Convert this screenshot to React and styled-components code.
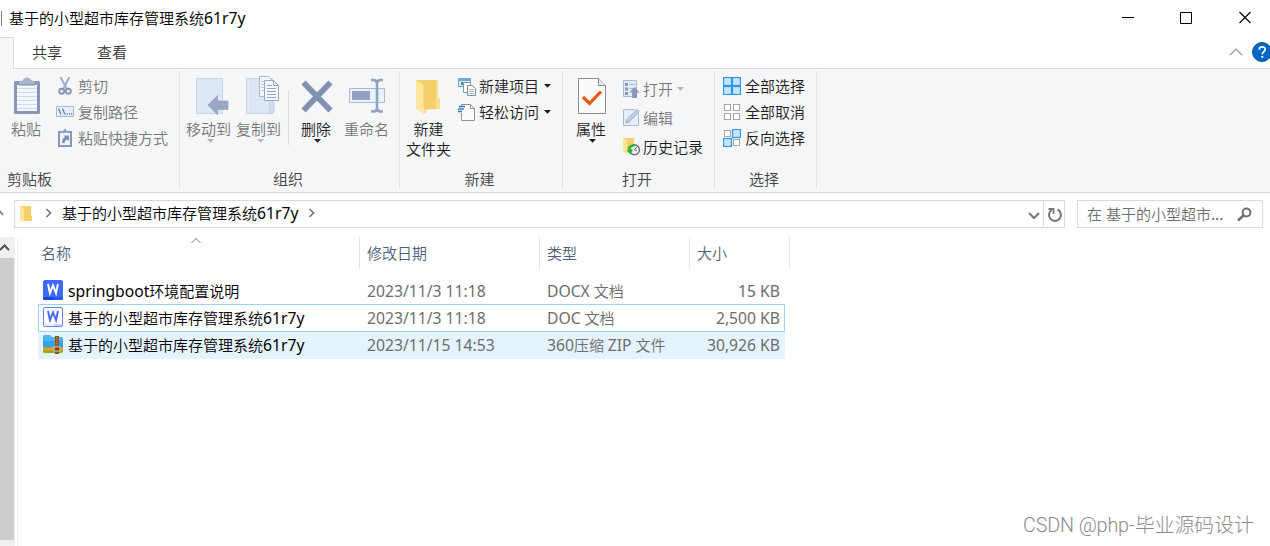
import styled, { createGlobalStyle } from "styled-components";

const GlobalStyle = createGlobalStyle`
  * {
    box-sizing: border-box;
  }
  body {
    margin: 0;
    overflow: hidden;
    background: #fff;
    font-family: "Noto Sans", "Noto Sans CJK SC", sans-serif;
    font-size: 15px;
    font-weight: 350;
    line-height: 20px;
    color: #000;
  }
  svg {
    display: block;
    flex: none;
  }
`;

const Window = styled.div`
  position: relative;
  display: flex;
  flex-direction: column;
  width: 1270px;
  height: 546px;
  overflow: hidden;
  white-space: nowrap;
`;

const TitleBar = styled.div`
  display: flex;
  align-items: center;
  height: 37px;
  padding-bottom: 2px;
`;
const TitleMark = styled.div`
  width: 1px;
  height: 15px;
  margin: 2px 7px 0 1px;
  background: #7d7d7d;
`;
const Title = styled.div`
  flex: 1;
`;
const Latin = styled.span`
  font-size: 15.7px;
  font-weight: 400;
  line-height: 1;
`;
const WindowButtons = styled.div`
  display: flex;
  gap: 45px;
  padding-right: 19px;
`;
const CloseButton = styled.div`
  margin-left: 1px;
`;

const TabBar = styled.div`
  display: flex;
  height: 32px;
`;
const ActiveTab = styled.div`
  width: 14px;
  background: #f5f6f7;
  border-top: 1px solid #dadbdc;
  border-right: 1px solid #dadbdc;
`;
const Tabs = styled.div`
  flex: 1;
  display: flex;
  align-items: center;
  gap: 35px;
  padding: 0 0 2px 18px;
  border-bottom: 1px solid #dadbdc;
  color: #333;
`;
const TabTools = styled.div`
  display: flex;
  align-items: center;
  gap: 9px;
  margin-left: auto;
  margin-right: -2px;
`;

const Ribbon = styled.div`
  display: flex;
  height: 124px;
  padding-top: 2px;
  background: #f5f6f7;
  border-bottom: 1px solid #dadbdc;
`;
const Group = styled.div`
  display: flex;
  flex-direction: column;
  width: ${props => props.$width}px;
  height: 118px;
  border-right: 1px solid #e2e3e4;
`;
const GroupBody = styled.div`
  display: flex;
  height: 98px;
  padding-left: ${props => props.$left || 0}px;
`;
const GroupLabel = styled.div`
  padding: ${props => props.$left ? "0 0 0 7px" : "0 3px 0 0"};
  text-align: ${props => props.$left ? "left" : "center"};
  color: #444;
`;
const BigButton = styled.div`
  display: flex;
  flex-direction: column;
  align-items: center;
  width: ${props => props.$width}px;
  padding-top: 5px;
  text-align: center;
  color: ${props => props.$disabled ? "#777" : "#1e1e1e"};
`;
const BigLabel = styled.div`
  margin-top: 1px;
`;
const BigArrow = styled.div`
  display: flex;
  padding-left: 3px;
`;
const Divider = styled.div`
  width: 1px;
  height: 55px;
  margin: 19px 0 0 5px;
  background: #dcddde;
`;
const Column = styled.div`
  display: flex;
  flex-direction: column;
  padding: ${props => props.$top}px 0 0 ${props => props.$left}px;
`;
const SmallButton = styled.div`
  display: flex;
  align-items: center;
  gap: ${props => props.$gap || 3}px;
  height: ${props => props.$height || 26}px;
  color: ${props => props.$disabled ? "#777" : "#1e1e1e"};
`;
const SmallArrow = styled.div`
  margin-left: 2px;
`;

const AddressRow = styled.div`
  display: flex;
  height: 44px;
  padding-top: 7px;
`;
const UpHint = styled.div`
  width: 14px;
  padding-top: 10px;
`;
const AddressBox = styled.div`
  display: flex;
  align-items: center;
  width: 1051px;
  height: 28px;
  padding-left: 4px;
  border: 1px solid #d9d9d9;
`;
const Crumb = styled.div`
  margin: 0 10px 2px 9px;
`;
const CrumbArrow = styled.div`
  margin-left: ${props => props.$left || 0}px;
  margin-bottom: 2px;
`;
const DropArrow = styled.div`
  margin: 3px 3px 0 auto;
`;
const Refresh = styled.div`
  display: flex;
  align-items: center;
  justify-content: center;
  width: 21px;
  height: 26px;
  padding: 2px 0 0 2px;
  border-left: 1px solid #d9d9d9;
`;
const SearchBox = styled.div`
  display: flex;
  align-items: center;
  justify-content: space-between;
  width: 186px;
  height: 28px;
  margin-left: 12px;
  padding: 0 10px 0 9px;
  border: 1px solid #d9d9d9;
  color: #6d6d6d;
`;

const Main = styled.div`
  flex: 1;
  display: flex;
`;
const Scrollbar = styled.div`
  width: 15px;
  background: #f0f0f0;
`;
const ScrollUp = styled.div`
  height: 21px;
  padding-top: 7px;
`;
const ScrollThumb = styled.div`
  width: 14px;
  height: 282px;
  background: #cdcdcd;
`;
const Files = styled.div`
  flex: 1;
  margin-left: 2px;
  padding-left: 20px;
  border-left: 1px solid #f0f0f0;
`;
const Header = styled.div`
  display: flex;
  height: 32px;
  margin-bottom: 8px;
  color: #4c607a;
`;
const HeaderCell = styled.div`
  position: relative;
  width: ${props => props.$width}px;
  padding: 6px 0 0 ${props => props.$left || 7}px;
  border-right: 1px solid #e5e5e5;
`;
const SortMark = styled.div`
  position: absolute;
  left: 153px;
  top: 1px;
`;
const Row = styled.div`
  display: flex;
  align-items: center;
  width: 747px;
  height: ${props => props.$focused ? 28 : 27}px;
  border: ${props => props.$focused ? "1px solid #99d1ff" : "none"};
  padding: ${props => props.$focused ? "0 4px" : "0 5px"};
  padding-bottom: ${props => props.$hover ? 2 : 0}px;
  background: ${props => props.$hover ? "#e5f3ff" : "#fff"};
`;
const NameCell = styled.div`
  display: flex;
  align-items: center;
  gap: 5px;
  width: 324px;

  svg {
    margin-bottom: 2px;
  }
`;
const InfoCell = styled.div`
  width: ${props => props.$width}px;
  text-align: ${props => props.$right ? "right" : "left"};
  color: #6d6d6d;
`;

const Watermark = styled.div`
  position: absolute;
  left: 1023px;
  top: 514px;
  font-family: Roboto, "Noto Sans CJK SC", sans-serif;
  font-size: 19.8px;
  font-weight: 300;
  line-height: 24px;
  color: #8c8c8c;
`;
const WatermarkLatin = styled.span`
  display: inline-block;
  width: 112px;
  letter-spacing: -0.15px;
`;

const Arrow = ({ color = "#1e1e1e" }) => (
  <svg width="7" height="4" viewBox="0 0 7 4"><path d="M0 0h7L3.5 3.8z" fill={color} /></svg>
);

const Chevron = ({ width, height, d, color, stroke = 1.2 }) => (
  <svg width={width} height={height}><path d={d} fill="none" stroke={color} strokeWidth={stroke} /></svg>
);

const PasteIcon = () => (
  <svg width="52" height="42">
    <rect x="14" y="5" width="26" height="33" rx="1.5" fill="#8797b8" />
    <path d="M17 9h20v26H17z" fill="#f3f7fd" />
    <path d="M17 12.5h20M17 16.5h20M17 20.5h20M17 24.5h20M17 28.5h20M17 32.5h20" stroke="#d0dced" />
    <path d="M19 9V6l4-2c1-3.5 7-3.5 8 0l4 2v3z" fill="#a6b5cf" />
    <path d="M19 9h16" stroke="#7888aa" />
  </svg>
);

const Sheet = ({ x }) => (
  <>
    <path d={`M${x + 0.5} 2.5h26v35h-26z`} fill="#dce6f4" stroke="#c8d6ea" />
    <path d={`M${x + 2.5} 3v34`} stroke="#e8eff9" />
  </>
);

const MoveIcon = () => (
  <svg width="51" height="42">
    <Sheet x={13} />
    <path d="M25 29l9.500-9.500V25H45v8.500H34.500V39z" fill="#9aa8c5" stroke="#8c9cbd" strokeWidth=".6" />
  </svg>
);

const CopyIcon = () => (
  <svg width="49" height="42">
    <Sheet x={12} />
    <path d="M36 37V27c0-2 4-2 4 0v8c0 2-2 2.500-4 2.500z" fill="#d3dfef" stroke="#bfcde2" />
    <path d="M25.500.500h9l4 4v16h-13z" fill="#f5f9ff" stroke="#a7b6d1" />
    <path d="M27 5.500h5M27 8.500h5M27 11.500h5M27 14.500h5" stroke="#b8c5da" />
    <path d="M30.500 4.500h9l5 5v15h-14z" fill="#f5f9ff" stroke="#94a5c5" />
    <path d="M39.500 4.500v5h5M33 9.500h5M33 12.500h9M33 15.500h9M33 18.500h9M33 21.500h9" fill="none" stroke="#94a5c5" />
  </svg>
);

const DeleteIcon = () => (
  <svg width="54" height="42">
    <path d="M14.500 6.500l27 28M41.500 6.500l-27 28" stroke="#8191b3" strokeWidth="5.800" />
  </svg>
);

const RenameIcon = () => (
  <svg width="47" height="42">
    <path d="M6.500 12.500h35v14h-35z" fill="#e9f1fc" stroke="#a9b9d3" />
    <path d="M9 15h18v9H9z" fill="#91a1c0" />
    <path d="M28 4h2.500Q34 4 34 8q0-4 3.500-4H40M28 35.500h2.500Q34 35.500 34 31.500q0 4 3.500 4H40M34 7v26" fill="none" stroke="#91a1c0" strokeWidth="2.600" />
  </svg>
);

const NewFolderIcon = () => (
  <svg width="51" height="42">
    <path d="M13 4h22v18l2 1v10l-16 .500z" fill="#f6cf6b" />
    <path d="M33 4h2v18l2 1v10h-4z" fill="#f9dc8c" />
    <path d="M13 4l7.500 5v29L13 32z" fill="#ffe79f" />
    <path d="M20.500 34v4l3-1v-3z" fill="#f0c75f" opacity=".5" />
  </svg>
);

const PropertiesIcon = () => (
  <svg width="50" height="42">
    <path d="M12.500 2.500h20l7 7v28h-27z" fill="#fafafa" stroke="#8d8d8d" />
    <path d="M32.500 2.500v7h7" fill="#e6e6e6" stroke="#8d8d8d" />
    <path d="M17 21l6.500 6.500L35 15.500" fill="none" stroke="#f0560f" strokeWidth="3.200" />
  </svg>
);

const CutIcon = () => (
  <svg width="18" height="18">
    <path d="M4.500 0l6.300 12M13.500 0L7.200 12" stroke="#9dacc8" strokeWidth="1.900" />
    <circle cx="5.700" cy="14.300" r="2.500" fill="none" stroke="#8494b5" strokeWidth="1.900" />
    <circle cx="12.300" cy="14.300" r="2.500" fill="none" stroke="#8494b5" strokeWidth="1.900" />
  </svg>
);

const PathIcon = () => (
  <svg width="18" height="12">
    <path d="M.500.500h17v10H.500z" fill="#e6eefa" stroke="#a9b9d3" />
    <path d="M2.500 2.500l2.500 6M6.500 2.500l2.500 6M10.500 8h1.300M12.800 8h1.300M15 8h1.300" stroke="#6f80a4" strokeWidth="1.300" />
  </svg>
);

const ShortcutIcon = () => (
  <svg width="18" height="18">
    <path d="M3 3h12v14H3z" fill="#edf4fd" stroke="#8797b8" strokeWidth="2" />
    <path d="M5 4V2.500L7.500 1.500c.500-2 2.500-2 3 0L13 2.500V4z" fill="#91a1c0" />
    <path d="M6 14c0-3 1-5 3-6L7.500 6.500H13V12l-1.800-1.500C9 11.500 8.500 13 8.500 14z" fill="#7f90b2" />
  </svg>
);

const NewItemIcon = () => (
  <svg width="18" height="19">
    <path d="M.500 1.500h12v8H.500z" fill="#cfeafa" stroke="#6da6c9" />
    <path d="M1 2h11v2H1z" fill="#70aed4" />
    <path d="M3 5h2v3H3z" fill="#4e9b69" />
    <path d="M5.500 5.500h7v10h-7z" fill="#fff" stroke="#8197aa" />
    <path d="M9.500 8.500h5l3 3v7h-8z" fill="#fff" stroke="#7890a4" />
    <path d="M11 12.500h5M11 14.500h5M11 16.500h5" stroke="#9eb5c8" />
  </svg>
);

const EasyAccessIcon = () => (
  <svg width="18" height="19">
    <path d="M3.500 3V1.500h9l4 4v12h-13V10" fill="#fcfcfc" stroke="#929292" />
    <path d="M12.500 1.500v4h4" fill="none" stroke="#929292" />
    <path d="M1 3.500h6M0 6h6M-1 8.500h5" stroke="#2f78bd" strokeWidth="1.500" />
  </svg>
);

const OpenIcon = () => (
  <svg width="18" height="19">
    <path d="M.500 1.500h13v16H.500z" fill="#dfe9f7" stroke="#a9b9d3" />
    <path d="M2 4h3v3H2zM2 8.500h3v3H2zM2 13h3v3H2z" fill="#8797b8" />
    <path d="M6.500 5.500H12M6.500 9.500H11" stroke="#a9b9d3" />
    <path d="M11.500 8l5 5.500H14V19H9v-5.500H6.500z" fill="#8999ba" />
  </svg>
);

const EditIcon = () => (
  <svg width="18" height="19">
    <path d="M.500 1.500h11l4 4v12H.500z" fill="#e4edf9" stroke="#a9b9d3" />
    <path d="M3 15l1-3.500L14 1.500l2 2L6.500 13.500z" fill="#c3d0e5" stroke="#8c9cbc" strokeWidth=".8" />
  </svg>
);

const HistoryIcon = () => (
  <svg width="18" height="19">
    <path d="M0 1h11v15H3z" fill="#f5cf6d" />
    <path d="M0 1l4 2v15l-4-3z" fill="#ffe598" />
    <circle cx="11.500" cy="12.800" r="5" fill="#ededed" stroke="#737373" strokeWidth="1.400" />
    <path d="M11.500 12.500l3-3M11.500 12.500l2.500 1" stroke="#666" />
    <path d="M11.500 7.500C7 7 4.500 9.500 5.300 13H3.500l4 4.500 2.500-5H8c-.3-2 1-3 3.500-3z" fill="#27b42d" />
  </svg>
);

const SelectIcon = ({ filled }) => (
  <svg width="18" height="18">
    {[[0, 0], [9, 0], [0, 9], [9, 9]].map(([x, y], i) => (
      filled.includes(i)
        ? <rect key={i} x={x + 0.5} y={y + 0.5} width="8" height="8" fill="#bfe4fc" stroke="#2f96e8" strokeWidth="1.200" />
        : <rect key={i} x={x + 1.5} y={y + 1.5} width="6" height="6" fill="#fff" stroke="#a5a5a5" />
    ))}
  </svg>
);

const SmallFolderIcon = () => (
  <svg width="14" height="18">
    <path d="M1 1h11v9l1 1v5H3z" fill="#f6cf6b" />
    <path d="M1 1l4 2.500V17l-4-2z" fill="#ffe59a" />
  </svg>
);

const WordIcon = ({ outline }) => (
  <svg width="20" height="20">
    <rect x=".5" y=".5" width="19" height="19" rx="1.500" fill={outline ? "#fff" : "#3c69fb"} stroke={outline ? "#6684f3" : "#3c69fb"} />
    <path d={outline ? "M1 17h10v2H1z" : "M0 17h10v3H1.500Q0 20 0 18.500z"} fill={outline ? "#e8edff" : "#1748d6"} />
    <path d={outline ? "M11 17h8v2h-8z" : "M10 17h10v1.500q0 1.500-1.500 1.500H10z"} fill={outline ? "#c3cffb" : "#2859ee"} />
    <path d="M5 4l2 9 3-7.500 3 7.500 2-9" fill="none" stroke={outline ? "#4b6cf0" : "#fff"} strokeWidth="2" />
  </svg>
);

const ZipIcon = () => (
  <svg width="20" height="20">
    <path d="M0 2.500Q0 1 1.500 1H7l2 2h9.500Q20 3 20 4.500V15H0z" fill="#4ab5ef" />
    <path d="M0 7h20v7H0z" fill="#36a3e7" />
    <path d="M0 13.500h20V17H0z" fill="#ff9421" />
    <path d="M0 16.500h20v1q0 1.500-1.500 1.500h-17Q0 19 0 17.500z" fill="#77b82b" />
    <path d="M12 2h4v18h-4z" fill="#93511f" />
    <path d="M14 3v11" stroke="#d39a57" strokeDasharray="1 1" />
    <path d="M11 13h6v4h-6z" fill="#65401f" stroke="#f5cf91" />
  </svg>
);

const files = [
  { prefix: "springboot", name: "环境配置说明", date: "2023/11/3 11:18", ext: "DOCX", type: " 文档", size: "15 KB", icon: <WordIcon /> },
  { name: "基于的小型超市库存管理系统", suffix: "61r7y", date: "2023/11/3 11:18", ext: "DOC", type: " 文档", size: "2,500 KB", icon: <WordIcon outline />, focused: true },
  { name: "基于的小型超市库存管理系统", suffix: "61r7y", date: "2023/11/15 14:53", ext: "360", type: "压缩 ", kind: "ZIP", rest: " 文件", size: "30,926 KB", icon: <ZipIcon />, hover: true },
];

const ClipboardGroup = () => (
  <Group $width={180}>
    <GroupBody>
      <BigButton $width={52} $disabled>
        <PasteIcon />
        <BigLabel>粘贴</BigLabel>
      </BigButton>
      <Column $top={2} $left={4}>
        <SmallButton $disabled $gap={4}><CutIcon />剪切</SmallButton>
        <SmallButton $disabled $gap={4}><PathIcon />复制路径</SmallButton>
        <SmallButton $disabled $gap={4}><ShortcutIcon />粘贴快捷方式</SmallButton>
      </Column>
    </GroupBody>
    <GroupLabel $left>剪贴板</GroupLabel>
  </Group>
);

const OrganizeGroup = () => (
  <Group $width={220}>
    <GroupBody $left={3}>
      <BigButton $width={51} $disabled>
        <MoveIcon />
        <BigLabel>移动到</BigLabel>
        <BigArrow><Arrow color="#b5b5b5" /></BigArrow>
      </BigButton>
      <BigButton $width={49} $disabled>
        <CopyIcon />
        <BigLabel>复制到</BigLabel>
        <BigArrow><Arrow color="#b5b5b5" /></BigArrow>
      </BigButton>
      <Divider />
      <BigButton $width={54}>
        <DeleteIcon />
        <BigLabel>删除</BigLabel>
        <BigArrow><Arrow /></BigArrow>
      </BigButton>
      <BigButton $width={47} $disabled>
        <RenameIcon />
        <BigLabel>重命名</BigLabel>
      </BigButton>
    </GroupBody>
    <GroupLabel>组织</GroupLabel>
  </Group>
);

const NewGroup = () => (
  <Group $width={163}>
    <GroupBody $left={3}>
      <BigButton $width={51}>
        <NewFolderIcon />
        <BigLabel>新建<br />文件夹</BigLabel>
      </BigButton>
      <Column $top={2} $left={4}>
        <SmallButton><NewItemIcon />新建项目<SmallArrow><Arrow /></SmallArrow></SmallButton>
        <SmallButton><EasyAccessIcon />轻松访问<SmallArrow><Arrow /></SmallArrow></SmallButton>
      </Column>
    </GroupBody>
    <GroupLabel>新建</GroupLabel>
  </Group>
);

const OpenGroup = () => (
  <Group $width={152}>
    <GroupBody $left={3}>
      <BigButton $width={50}>
        <PropertiesIcon />
        <BigLabel>属性</BigLabel>
        <BigArrow><Arrow /></BigArrow>
      </BigButton>
      <Column $top={3} $left={7}>
        <SmallButton $height={29} $gap={2} $disabled><OpenIcon />打开<SmallArrow><Arrow color="#b5b5b5" /></SmallArrow></SmallButton>
        <SmallButton $height={29} $gap={2} $disabled><EditIcon />编辑</SmallButton>
        <SmallButton $height={29} $gap={2}><HistoryIcon />历史记录</SmallButton>
      </Column>
    </GroupBody>
    <GroupLabel>打开</GroupLabel>
  </Group>
);

const SelectGroup = () => (
  <Group $width={102}>
    <GroupBody>
      <Column $top={2} $left={8}>
        <SmallButton $gap={4}><SelectIcon filled={[0, 1, 2, 3]} />全部选择</SmallButton>
        <SmallButton $gap={4}><SelectIcon filled={[]} />全部取消</SmallButton>
        <SmallButton $gap={4}><SelectIcon filled={[1, 2]} />反向选择</SmallButton>
      </Column>
    </GroupBody>
    <GroupLabel>选择</GroupLabel>
  </Group>
);

const App = () => {
  return (
    <Window>
      <GlobalStyle />
      <TitleBar>
        <TitleMark />
        <Title>基于的小型超市库存管理系统<Latin>61r7y</Latin></Title>
        <WindowButtons>
          <svg width="13" height="13"><path d="M0 6.500h12" stroke="#000" /></svg>
          <svg width="13" height="13"><path d="M.500 1.500h11v11H.500z" fill="none" stroke="#000" /></svg>
          <CloseButton>
            <svg width="12" height="13"><path d="M.500 1l11 11M11.500 1l-11 11" stroke="#000" strokeWidth="1.100" /></svg>
          </CloseButton>
        </WindowButtons>
      </TitleBar>
      <TabBar>
        <ActiveTab />
        <Tabs>
          <div>共享</div>
          <div>查看</div>
          <TabTools>
            <Chevron width={14} height={8} d="M1 7l6-6 6 6" color="#999" />
            <svg width="20" height="20">
              <circle cx="10" cy="10" r="9.500" fill="#0068c9" stroke="#14508c" />
              <path d="M7.200 7.800c0-4 6-3.800 6-.5 0 2.400-2.900 2.300-2.900 5" fill="none" stroke="#fff" strokeWidth="1.700" />
              <circle cx="10.300" cy="14.900" r="1.100" fill="#fff" />
            </svg>
          </TabTools>
        </Tabs>
      </TabBar>
      <Ribbon>
        <ClipboardGroup />
        <OrganizeGroup />
        <NewGroup />
        <OpenGroup />
        <SelectGroup />
      </Ribbon>
      <AddressRow>
        <UpHint><Chevron width={5} height={8} d="M-2 2l1.500-1L3 5" color="#777" stroke={1.6} /></UpHint>
        <AddressBox>
          <SmallFolderIcon />
          <CrumbArrow $left={12}><Chevron width={8} height={10} d="M1.500 1l4 4-4 4" color="#777" stroke={1.7} /></CrumbArrow>
          <Crumb>基于的小型超市库存管理系统<Latin>61r7y</Latin></Crumb>
          <CrumbArrow><Chevron width={8} height={10} d="M1.500 1l4 4-4 4" color="#777" stroke={1.7} /></CrumbArrow>
          <DropArrow><Chevron width={12} height={8} d="M1 1l5 5 5-5" color="#777" stroke={2} /></DropArrow>
          <Refresh>
            <svg width="16" height="16">
              <path d="M10.500 2.500A6 6 0 1 1 4.500 3" fill="none" stroke="#757575" strokeWidth="2" />
              <path d="M1.500 2h5v5" fill="none" stroke="#757575" strokeWidth="1.800" />
            </svg>
          </Refresh>
        </AddressBox>
        <SearchBox>
          <div>在 基于的小型超市<Latin>...</Latin></div>
          <svg width="15" height="15">
            <circle cx="9.500" cy="5.500" r="3.900" fill="none" stroke="#6d6d6d" strokeWidth="2" />
            <path d="M6.500 8.500l-5.500 5" stroke="#6d6d6d" strokeWidth="2.400" />
          </svg>
        </SearchBox>
      </AddressRow>
      <Main>
        <Scrollbar>
          <ScrollUp><Chevron width={10} height={8} d="M0 6l4.500-4.500L9 6" color="#505050" stroke={2} /></ScrollUp>
          <ScrollThumb />
        </Scrollbar>
        <Files>
          <Header>
            <HeaderCell $width={322} $left={3}>
              名称
              <SortMark><Chevron width={10} height={6} d="M.5 5l4.500-4.500L9.500 5" color="#777" stroke={1} /></SortMark>
            </HeaderCell>
            <HeaderCell $width={180}>修改日期</HeaderCell>
            <HeaderCell $width={150}>类型</HeaderCell>
            <HeaderCell $width={100}>大小</HeaderCell>
          </Header>
          {files.map((file, i) => (
            <Row key={i} $focused={file.focused} $hover={file.hover}>
              <NameCell>
                {file.icon}
                <div>
                  {file.prefix && <Latin>{file.prefix}</Latin>}
                  {file.name}
                  {file.suffix && <Latin>{file.suffix}</Latin>}
                </div>
              </NameCell>
              <InfoCell $width={180}><Latin>{file.date}</Latin></InfoCell>
              <InfoCell $width={150}>
                <Latin>{file.ext}</Latin>{file.type}
                {file.kind && <Latin>{file.kind}</Latin>}{file.rest}
              </InfoCell>
              <InfoCell $width={83} $right><Latin>{file.size}</Latin></InfoCell>
            </Row>
          ))}
        </Files>
      </Main>
      <Watermark><WatermarkLatin>CSDN @php-</WatermarkLatin>毕业源码设计</Watermark>
    </Window>
  );
};

export default App;
